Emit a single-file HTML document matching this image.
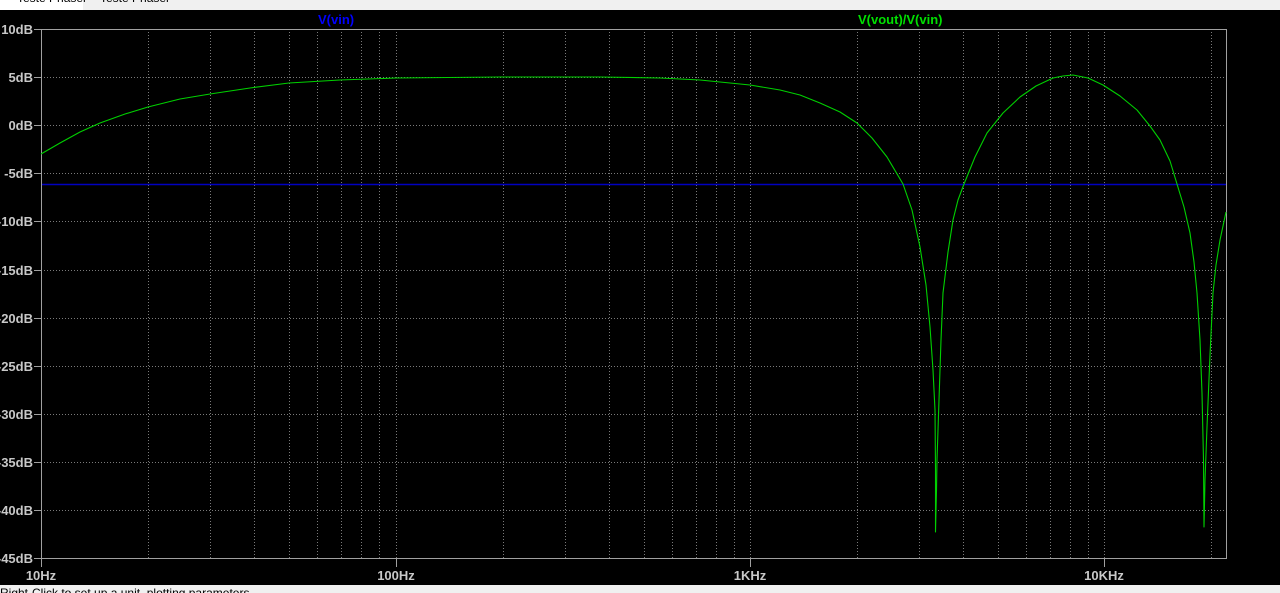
<!DOCTYPE html>
<html><head><style>
body{margin:0;width:1280px;height:593px;overflow:hidden;background:#000;font-family:"Liberation Sans",Arial,sans-serif}
</style></head><body>
<svg width="1280" height="593" xmlns="http://www.w3.org/2000/svg" style="position:absolute;left:0;top:0">
<rect x="0" y="0" width="1280" height="593" fill="#000"/>
<rect x="0" y="0" width="1280" height="10" fill="#f0f0f0"/>
<rect x="0" y="0" width="83" height="10" fill="#fff"/>
<text x="17" y="2" font-size="12" fill="#000">Teste Phaser</text>
<text x="100" y="2" font-size="12" fill="#000">Teste Phaser</text>
<rect x="0" y="585" width="1280" height="8" fill="#f0f0f0"/>
<text x="0" y="597" font-size="12" fill="#000">Right-Click to set up a unit, plotting parameters</text>
<g stroke="#7a7a7a" stroke-width="1" stroke-dasharray="1,2" fill="none">
<path d="M148.5 29V559M210.5 29V559M254.5 29V559M289.5 29V559M317.5 29V559M341.5 29V559M361.5 29V559M379.5 29V559M396.5 29V559M503.5 29V559M565.5 29V559M609.5 29V559M644.5 29V559M672.5 29V559M696.5 29V559M716.5 29V559M734.5 29V559M750.5 29V559M857.5 29V559M919.5 29V559M963.5 29V559M998.5 29V559M1026.5 29V559M1050.5 29V559M1070.5 29V559M1088.5 29V559M1104.5 29V559M1211.5 29V559"/>
<path d="M41 77.5H1227M41 125.5H1227M41 173.5H1227M41 221.5H1227M41 270.5H1227M41 318.5H1227M41 366.5H1227M41 414.5H1227M41 462.5H1227M41 510.5H1227"/>
</g>
<g stroke="#a0a0a0" stroke-width="1" fill="none">
<rect x="41.5" y="29.5" width="1185" height="529"/>
<path d="M34 29.5H41M34 77.5H41M34 125.5H41M34 173.5H41M34 221.5H41M34 270.5H41M34 318.5H41M34 366.5H41M34 414.5H41M34 462.5H41M34 510.5H41M34 558.5H41"/>
<path d="M41.5 559V567M396.5 559V567M750.5 559V567M1104.5 559V567"/>
</g>
<line x1="42" y1="184.5" x2="1226" y2="184.5" stroke="#0000c0" stroke-width="1.5"/>
<polyline fill="none" stroke="#00d000" stroke-width="1.1" stroke-linejoin="round" points="41,154 60,143 80,132 100,123 125,114 148,107 180,99 210,94 250,88 289,83 340,80 396,78 500,77 600,77 660,78 700,80 750,85 780,90 800,95 820,103 840,112 857,123 872,138 887,157 903,184 912,210 920,247 926,285 930,327 933,370 935,410 935.5,470 935.5,532 936.5,490 937,460 939,400 941,340 943,293 948,252 953,220 958,200 964,184 975,157 987,133 1003,113 1020,97 1036,86 1053,78 1063,76 1073,75 1088,78 1103,85 1120,96 1137,110 1150,126 1160,140 1170,161 1177,184 1184,207 1190,233 1194,262 1197,293 1200,340 1202,393 1203.5,460 1204,527 1205,480 1207,427 1210,355 1213,293 1216,265 1220,240 1226,212"/>
<g font-size="13" font-weight="bold" fill="#c8c8c8">
<g text-anchor="end">
<text x="33" y="34">10dB</text><text x="33" y="82">5dB</text><text x="33" y="130">0dB</text>
<text x="33" y="178">-5dB</text><text x="33" y="226">-10dB</text><text x="33" y="275">-15dB</text>
<text x="33" y="323">-20dB</text><text x="33" y="371">-25dB</text><text x="33" y="419">-30dB</text>
<text x="33" y="467">-35dB</text><text x="33" y="515">-40dB</text><text x="33" y="563">-45dB</text>
</g>
<g text-anchor="middle">
<text x="41" y="580">10Hz</text><text x="396" y="580">100Hz</text><text x="750" y="580">1KHz</text><text x="1104" y="580">10KHz</text>
</g>
</g>
<text x="318" y="24" font-size="13" font-weight="bold" fill="#0000ff">V(vin)</text>
<text x="858" y="24" font-size="13" font-weight="bold" fill="#00e000">V(vout)/V(vin)</text>
</svg>
</body></html>
